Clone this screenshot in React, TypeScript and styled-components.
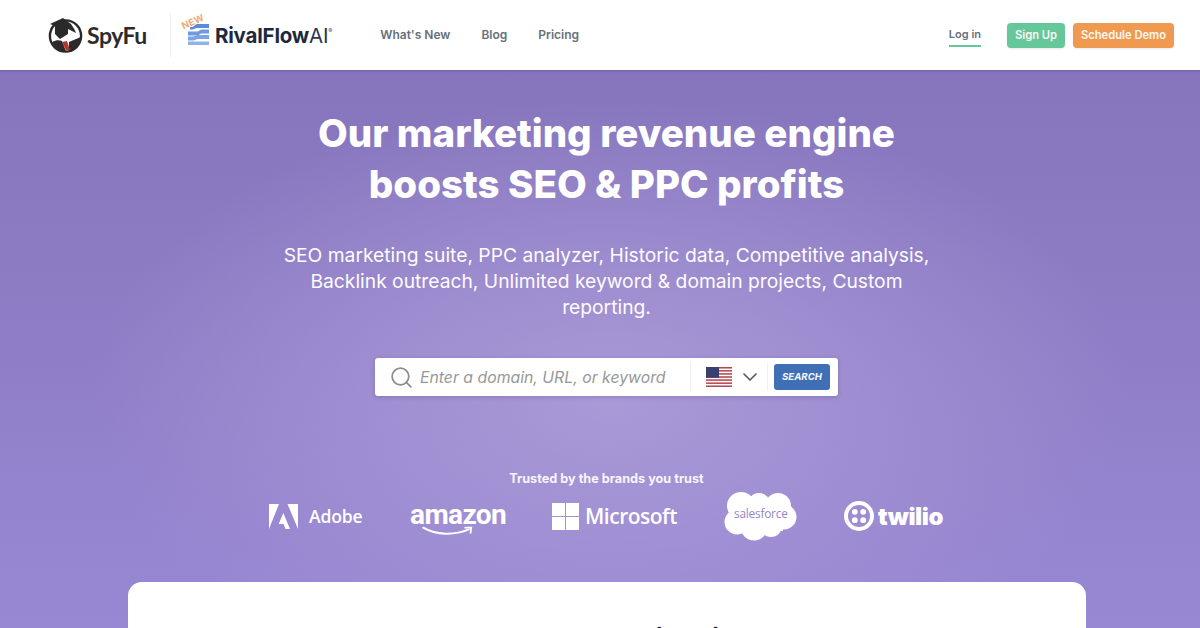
import React from "react";
import styled, { createGlobalStyle } from "styled-components";
import { Search, ChevronDown } from "lucide-react";

const Global = createGlobalStyle`
  html, body { margin: 0; padding: 0; height: 100%; overflow: hidden; }
  body { font-family: Inter, "Liberation Sans", sans-serif; background: #8f7fc8; }
`;

const Page = styled.div`
  width: 1200px;
  height: 628px;
  overflow: hidden;
  display: flex;
  flex-direction: column;
  background:
    radial-gradient(ellipse 520px 300px at 610px 400px, rgba(172, 155, 216, 0.95) 0%, rgba(172, 155, 216, 0) 100%),
    linear-gradient(180deg, #8473ba 0%, #8d7cc4 45%, #9887d3 100%);
`;

const Header = styled.header`
  height: 70px;
  flex: none;
  box-sizing: border-box;
  background: #fff;
  display: flex;
  align-items: center;
  padding: 0 26px 0 48px;
  box-shadow: 0 1px 2px rgba(60, 50, 110, 0.35);
`;

const SpyFuBrand = styled.div`
  display: flex;
  align-items: center;
  gap: 4px;
`;

const SpyFuName = styled.span`
  font-family: Lato, sans-serif;
  font-weight: 700;
  font-size: 23px;
  letter-spacing: -0.5px;
  color: #2c2c2c;
  width: 60px;
`;

const Divider = styled.div`
  width: 1px;
  height: 44px;
  background: #f0f0f0;
  margin: 0 17px 0 23px;
`;

const RivalBrand = styled.div`
  position: relative;
  display: flex;
  align-items: center;
  gap: 6px;
  padding-top: 1px;
`;

const StackSvg = styled.svg`
  display: block;
  margin-top: -3px;
`;

const NewTag = styled.span`
  position: absolute;
  left: -7px;
  top: -6px;
  font-size: 9.5px;
  font-weight: 700;
  letter-spacing: 0.2px;
  color: #eeab72;
  transform: rotate(-24deg);
`;

const RivalName = styled.span`
  font-size: 20.5px;
  font-weight: 700;
  letter-spacing: -0.2px;
  color: #1e2a3c;
`;

const RivalAi = styled.span`
  font-weight: 400;
  color: #2c3648;
`;

const RivalMark = styled.sup`
  font-size: 6px;
  font-weight: 400;
  vertical-align: 10px;
  line-height: 0;
  color: #556;
`;

const Nav = styled.nav`
  display: flex;
  gap: 31px;
  margin: 0 0 2px 48px;
`;

const NavLink = styled.a`
  font-size: 12px;
  font-weight: 600;
  color: #66707a;
`;

const Actions = styled.div`
  margin-left: auto;
  display: flex;
  align-items: center;
  gap: 8px;
`;

const LogIn = styled.a`
  font-size: 11px;
  font-weight: 600;
  color: #66707f;
  padding: 4px 0 4px;
  margin: 0 18px 0 0;
  border-bottom: 2px solid #66c79b;
`;

const ActionButton = styled.a<{ $bg: string; $w: number }>`
  display: flex;
  align-items: center;
  justify-content: center;
  width: ${(p) => p.$w}px;
  height: 25px;
  border-radius: 4px;
  background: ${(p) => p.$bg};
  color: #fdf8f2;
  font-size: 11.2px;
  font-weight: 600;
  box-shadow: 0 1px 2px rgba(0, 0, 0, 0.08);
`;

const Hero = styled.main`
  flex: 1;
  display: flex;
  flex-direction: column;
  align-items: center;
  padding-top: 38px;
  padding-left: 13px;
  color: #fff;
`;

const Title = styled.h1`
  margin: 0;
  font-size: 38.5px;
  line-height: 51px;
  font-weight: 800;
  text-align: center;
  letter-spacing: 0;
`;

const Lead = styled.p`
  margin: 32px 0 0;
  width: 680px;
  font-size: 19.25px;
  line-height: 26px;
  font-weight: 400;
  text-align: center;
  color: #fdfcff;
`;

const SearchBar = styled.form`
  margin-top: 38px;
  width: 463px;
  height: 38px;
  box-sizing: border-box;
  background: #fff;
  border-radius: 3px;
  display: flex;
  align-items: center;
  padding: 0 8px 0 14px;
  box-shadow: 0 1px 4px rgba(60, 50, 110, 0.25);
`;

const Placeholder = styled.span`
  margin-left: 6px;
  width: 270px;
  font-size: 15.8px;
  font-style: italic;
  color: #989898;
`;

const VLine = styled.span`
  width: 1px;
  height: 28px;
  background: #f0f0f0;
`;

const Flag = styled.svg`
  margin-left: 15px;
  display: block;
`;

const ChevronSlot = styled.span`
  display: flex;
  margin: 0 5px 0 6px;
  color: #555c66;
`;

const SearchButton = styled.button`
  margin-left: 6px;
  width: 56px;
  height: 26px;
  padding: 0 0 1px;
  border: none;
  border-radius: 3px;
  background: #3f70b5;
  color: #f2f6fc;
  font-family: inherit;
  font-size: 9.6px;
  font-weight: 700;
  font-style: italic;
`;

const Trusted = styled.div`
  margin-top: 74px;
  font-size: 12.7px;
  line-height: 18px;
  font-weight: 700;
  color: #f7f5fc;
`;

const Brands = styled.div`
  width: 700px;
  height: 52px;
  margin-top: 2px;
  margin-left: 25px;
  display: flex;
  align-items: center;
`;

const Brand = styled.div<{ $w: number }>`
  width: ${(p) => p.$w}px;
  flex: none;
  display: flex;
  align-items: center;
  color: #fff;
`;

const AdobeName = styled.span`
  margin-left: 11px;
  font-family: "Open Sans", sans-serif;
  font-size: 17.6px;
  font-weight: 600;
  letter-spacing: -0.2px;
`;

const AmazonWrap = styled.div`
  position: relative;
  height: 36px;
  width: 95px;
`;

const AmazonName = styled.span`
  position: absolute;
  left: 0;
  top: -1px;
  font-family: Roboto, sans-serif;
  font-size: 28px;
  font-weight: 700;
  letter-spacing: -0.6px;
  line-height: 36px;
`;

const Smile = styled.svg`
  position: absolute;
  left: 12px;
  top: 28px;
`;

const MsName = styled.span`
  margin-left: 6px;
  font-family: "Open Sans", sans-serif;
  font-size: 21px;
  font-weight: 600;
  letter-spacing: -0.5px;
`;

const CloudWrap = styled.div`
  position: relative;
  width: 73px;
  height: 50px;
`;

const CloudText = styled.span`
  position: absolute;
  left: 10px;
  top: 14px;
  text-align: center;
  width: 53px;
  font-size: 11.8px;
  line-height: 16px;
  color: #9585c9;
  font-family: "Open Sans", sans-serif;
  font-weight: 400;
  letter-spacing: -0.2px;
`;

const TwilioName = styled.span`
  margin-left: 4px;
  font-size: 24px;
  font-weight: 900;
  letter-spacing: -0.4px;
`;

const Card = styled.section`
  margin-top: 40px;
  margin-left: 115px;
  width: 958px;
  height: 200px;
  flex: none;
  align-self: flex-start;
  background: #fff;
  border-radius: 14px;
  text-align: center;
  overflow: hidden;
`;

const CardTitle = styled.h2`
  margin: 40px 0 0;
  padding-left: 29px;
  font-size: 28px;
  line-height: 34px;
  font-weight: 700;
  color: #1c1c28;
`;

const SpyLogo = () => (
  <svg width="35" height="36" viewBox="0 0 35 36">
    <circle cx="17.5" cy="19" r="15.6" fill="#fff" stroke="#2a2a2a" strokeWidth="2.4" />
    <path d="M2 7 L15 1 L23 7 C25 10 27 13 28 16 L20 12 L20 17 L12 22 L7 17 L7 9 Z" fill="#2a2a2a" />
    <path d="M4 25 C8 23 11 23 14 24 L18 34 C12 35 7 31 4 25 Z" fill="#2a2a2a" />
    <path d="M21 25 L28 22 C30 21 31 21 33 20 C33 27 28 33 21 34 Z" fill="#2a2a2a" />
    <path d="M14 25 L19 24 L22 33 L18 33 Z" fill="#b8322e" />
  </svg>
);

const StackMark = () => (
  <StackSvg width="21" height="21" viewBox="0 0 21 21">
    <path d="M9 0 H21 V4 H9 C7.5 4 6 5.5 4 5.5 H2 V3 H4 C6 3 7.5 0 9 0 Z" fill="#5b8ad6" />
    <path d="M0 7.5 H9 C11 7.5 12 5.5 14 5.5 H21 V9.5 H14 C12 9.5 11 11.5 9 11.5 H0 Z" fill="#6f9ae0" />
    <path d="M0 12.5 H5 C7 12.5 8 11 10 11 H21 V15 H10 C8 15 7 16.5 5 16.5 H0 Z" fill="#7ba4e2" />
    <rect x="0" y="17.5" width="21" height="3.5" fill="#8fb2e8" />
  </StackSvg>
);

const UsFlag = () => {
  const stripes = Array.from({ length: 7 }, (_, i) => i * 2);
  return (
    <Flag width="26" height="20" viewBox="0 0 26 20">
      <rect width="26" height="20" fill="#fff" />
      {stripes.map((i) => (
        <rect key={i} y={(i * 20) / 13} width="26" height={20 / 13} fill="#b5474f" />
      ))}
      <rect width="13" height="10.8" fill="#39406e" />
    </Flag>
  );
};

const AdobeLogo = () => (
  <svg width="29" height="25" viewBox="0 0 29 25" fill="#fff">
    <path d="M0 0 H10 L0 25 Z" />
    <path d="M18.5 0 H29 V25 Z" />
    <path d="M14.3 9 L21 25 H16.5 L14.6 20 H9.7 Z" />
  </svg>
);

const MsLogo = () => (
  <svg width="27" height="27" viewBox="0 0 27 27" fill="#fff">
    <rect width="13" height="13" />
    <rect x="14" width="13" height="13" />
    <rect y="14" width="13" height="13" />
    <rect x="14" y="14" width="13" height="13" />
  </svg>
);

const CloudShape = () => (
  <svg width="73" height="50" viewBox="0 0 73 50" fill="#fff">
    <circle cx="17" cy="15" r="14" />
    <circle cx="35" cy="13" r="11" />
    <circle cx="54" cy="15" r="13" />
    <circle cx="60" cy="26" r="12.5" />
    <circle cx="13" cy="31" r="12.5" />
    <circle cx="30" cy="36" r="13.5" />
    <circle cx="47" cy="35" r="11" />
    <rect x="15" y="12" width="44" height="28" />
  </svg>
);

const TwilioLogo = () => (
  <svg width="30" height="30" viewBox="0 0 30 30" fill="#fff">
    <path fillRule="evenodd" d="M15 0 A15 15 0 1 0 15 30 A15 15 0 1 0 15 0 Z M15 4 A11 11 0 1 1 15 26 A11 11 0 1 1 15 4 Z" />
    <circle cx="10.8" cy="10.8" r="2.9" />
    <circle cx="19.2" cy="10.8" r="2.9" />
    <circle cx="10.8" cy="19.2" r="2.9" />
    <circle cx="19.2" cy="19.2" r="2.9" />
  </svg>
);

export default function App() {
  return (
    <>
      <Global />
      <Page>
        <Header>
          <SpyFuBrand>
            <SpyLogo />
            <SpyFuName>SpyFu</SpyFuName>
          </SpyFuBrand>
          <Divider />
          <RivalBrand>
            <NewTag>NEW</NewTag>
            <StackMark />
            <RivalName>
              RivalFlow<RivalAi>AI</RivalAi>
              <RivalMark>®</RivalMark>
            </RivalName>
          </RivalBrand>
          <Nav>
            <NavLink>What's New</NavLink>
            <NavLink>Blog</NavLink>
            <NavLink>Pricing</NavLink>
          </Nav>
          <Actions>
            <LogIn>Log in</LogIn>
            <ActionButton $bg="#66c79b" $w={58}>Sign Up</ActionButton>
            <ActionButton $bg="#ef9a50" $w={101}>Schedule Demo</ActionButton>
          </Actions>
        </Header>
        <Hero>
          <Title>
            Our marketing revenue engine
            <br />
            boosts SEO &amp; PPC profits
          </Title>
          <Lead>
            SEO marketing suite, PPC analyzer, Historic data, Competitive analysis, Backlink outreach, Unlimited keyword &amp; domain projects, Custom reporting.
          </Lead>
          <SearchBar>
            <Search size={25} color="#8d8d8d" strokeWidth={1.7} />
            <Placeholder>Enter a domain, URL, or keyword</Placeholder>
            <VLine />
            <UsFlag />
            <ChevronSlot>
              <ChevronDown size={24} strokeWidth={1.7} />
            </ChevronSlot>
            <VLine />
            <SearchButton type="button">SEARCH</SearchButton>
          </SearchBar>
          <Trusted>Trusted by the brands you trust</Trusted>
          <Brands>
            <Brand $w={141}>
              <AdobeLogo />
              <AdobeName>Adobe</AdobeName>
            </Brand>
            <Brand $w={142}>
              <AmazonWrap>
                <AmazonName>amazon</AmazonName>
                <Smile width="54" height="12" viewBox="0 0 62 14" fill="none">
                  <path d="M1 2 C16 11 38 11 54 4" stroke="#fff" strokeWidth="2.4" strokeLinecap="round" />
                  <path d="M49 2 L57 2 L56 9" stroke="#fff" strokeWidth="2" fill="none" />
                </Smile>
              </AmazonWrap>
            </Brand>
            <Brand $w={172}>
              <MsLogo />
              <MsName>Microsoft</MsName>
            </Brand>
            <Brand $w={120}>
              <CloudWrap>
                <CloudShape />
                <CloudText>salesforce</CloudText>
              </CloudWrap>
            </Brand>
            <Brand $w={110}>
              <TwilioLogo />
              <TwilioName>twilio</TwilioName>
            </Brand>
          </Brands>
          <Card>
            <CardTitle>your organic mix</CardTitle>
          </Card>
        </Hero>
      </Page>
    </>
  );
}
